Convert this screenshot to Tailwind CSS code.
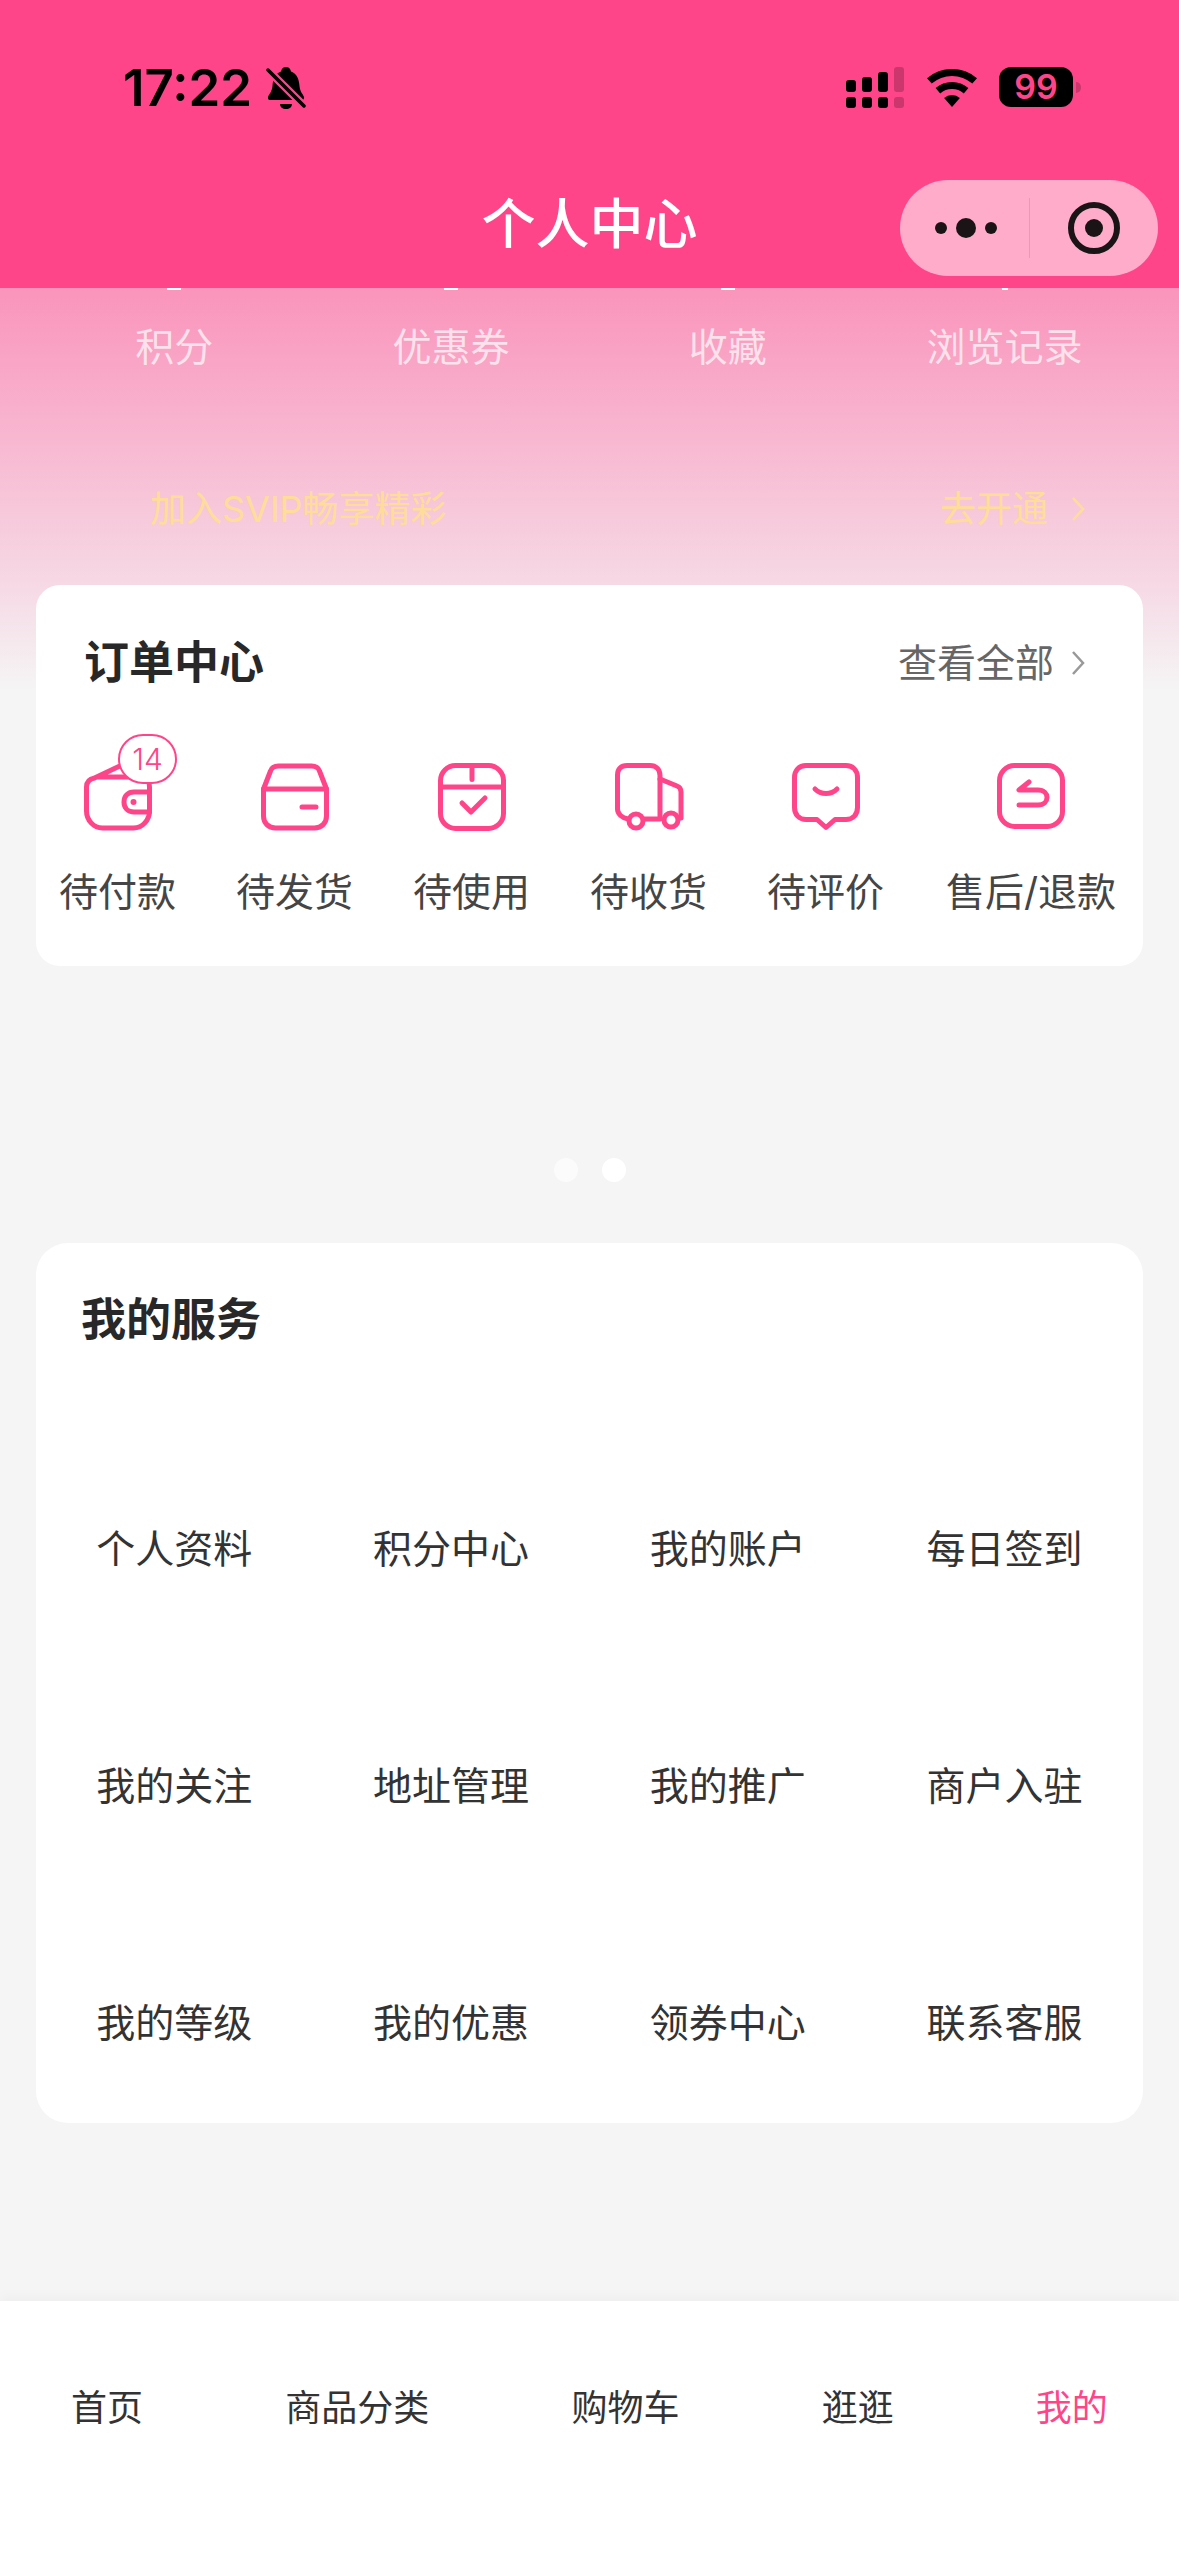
<!DOCTYPE html>
<html lang="zh-CN">
<head>
    <meta charset="UTF-8">
    <meta name="viewport" content="width=device-width, initial-scale=1.0">
    <title>个人中心</title>
    <script src="https://cdn.jsdelivr.net/npm/@tailwindcss/browser@4"></script>
</head>
<body class="bg-[#f5f5f5] font-['Inter','Noto_Sans_CJK_SC',sans-serif]">
<div class="relative flex flex-col w-[1179px] h-[2556px] overflow-hidden bg-[linear-gradient(180deg,#ff4589_0px,#fa94bb_288px,#f6d8e4_580px,#f5f5f5_690px)]">

    <!-- top bar -->
    <header class="h-[288px] shrink-0 bg-[#ff4589] relative">
        <div class="flex items-start justify-between pt-[67px] pl-[123px] pr-[98px] text-black">
            <div class="flex items-center gap-[14px] h-[41px]">
                <span class="text-[51px] leading-[41px] font-semibold">17:22</span>
                <svg width="40" height="42" viewBox="0 0 40 42">
                    <path d="M20 0c3 0 4.500 2 5 4.500C31 7 33 12 33.500 19c.5 6 3.500 8 4.500 11 .4 2-.5 3-2 3H4c-1.500 0-2.400-1-2-3 1-3 4-5 4.500-11C7 12 9 7 15 4.500 15.500 2 17 0 20 0z" fill="#000"/>
                    <path d="M14 37h12c0 3-2.500 5-6 5s-6-2-6-5z" fill="#000"/>
                    <path d="M2 3l37 37" stroke="#ff4589" stroke-width="8"/>
                    <path d="M2 3l36 36" stroke="#000" stroke-width="3.500" stroke-linecap="round"/>
                </svg>
            </div>
            <div class="flex items-start">
                <svg width="58" height="41" viewBox="0 0 58 41" class="block">
                    <g fill="#000">
                        <rect x="0" y="13" width="10" height="12" rx="3"/>
                        <rect x="16" y="10" width="10" height="15" rx="3"/>
                        <rect x="32" y="5" width="10" height="20" rx="3"/>
                        <rect x="0" y="30" width="10" height="11" rx="3"/>
                        <rect x="16" y="30" width="10" height="11" rx="3"/>
                        <rect x="32" y="30" width="10" height="11" rx="3"/>
                    </g>
                    <g fill="#000" opacity=".2">
                        <rect x="48" y="0" width="10" height="25" rx="3"/>
                        <rect x="48" y="30" width="10" height="11" rx="3"/>
                    </g>
                </svg>
                <svg width="50" height="38" viewBox="0 0 50 38" class="ml-[23px] mt-[2px]" fill="#000">
                    <path d="M0 9.300A38 38 0 0 1 50 9.300L45.300 14.600A31 31 0 0 0 4.700 14.600Z"/>
                    <path d="M8.600 19.100A25 25 0 0 1 41.400 19.100L36.800 24.400A18 18 0 0 0 13.200 24.400Z"/>
                    <path d="M17.100 28.900A12 12 0 0 1 32.900 28.900L25 38Z"/>
                </svg>
                <div class="ml-[22px] w-[74px] h-[40px] rounded-[12px] bg-black text-[#ff4589] text-[34px] leading-[40px] font-semibold text-center">99</div>
                <div class="ml-[3px] mt-[15px] w-[5px] h-[11px] rounded-r-full bg-black/20"></div>
            </div>
        </div>
        <h1 class="absolute left-0 right-0 top-[194px] text-center text-white text-[54px] leading-[62px] font-medium">个人中心</h1>
        <!-- capsule -->
        <div class="absolute left-[900px] top-[180px] w-[258px] h-[96px] rounded-[48px] bg-[#ffaccb] flex items-center">
            <div class="w-[129px] flex items-center justify-center gap-[9px] pl-[2px]">
                <span class="w-[12px] h-[12px] rounded-full bg-[#1b1417]"></span>
                <span class="w-[20px] h-[20px] rounded-full bg-[#1b1417]"></span>
                <span class="w-[12px] h-[12px] rounded-full bg-[#1b1417]"></span>
            </div>
            <div class="w-px h-[60px] bg-black/10"></div>
            <div class="flex-1 flex items-center justify-center">
                <div class="w-[52px] h-[52px] rounded-full border-[6px] border-[#1b1417] flex items-center justify-center">
                    <span class="w-[18px] h-[18px] rounded-full bg-[#1b1417]"></span>
                </div>
            </div>
        </div>
    </header>

    <!-- stat values, only their bottom edge shows below the bar -->
    <div class="grid grid-cols-4 mx-[36px] h-[2px] justify-items-center">
        <span class="w-[14px] h-[2px] bg-white"></span>
        <span class="w-[14px] h-[2px] bg-white"></span>
        <span class="w-[14px] h-[2px] bg-white"></span>
        <span class="w-[6px] h-[2px] bg-white"></span>
    </div>

    <!-- stats -->
    <div class="grid grid-cols-4 mx-[36px] pt-[34px] text-[39px] leading-[46px] text-white/70 text-center">
        <span>积分</span>
        <span>优惠券</span>
        <span>收藏</span>
        <span>浏览记录</span>
    </div>

    <!-- svip -->
    <div class="flex items-center justify-between mt-[116px] pl-[150px] pr-[94px] text-[#ffdd99] text-[36px] leading-[46px]">
        <span>加入SVIP畅享精彩</span>
        <span class="flex items-center gap-[23px]">去开通
            <svg width="14" height="26" viewBox="0 0 14 26" fill="none" stroke="#ffdd99" stroke-width="2.500"><path d="M2 2l10 11L2 24"/></svg>
        </span>
    </div>

    <!-- order center -->
    <section class="mx-[36px] mt-[53px] h-[381px] bg-white rounded-[24px] shrink-0">
        <div class="flex items-center justify-between pt-[51px] pl-[48px] pr-[58px] h-[104px]">
            <h2 class="text-[45px] leading-[54px] font-semibold text-[#282828]">订单中心</h2>
            <span class="flex items-center gap-[17px] text-[39px] leading-[46px] text-[#666]">查看全部
                <svg width="14" height="26" viewBox="0 0 14 26" fill="none" stroke="#999" stroke-width="2.500"><path d="M2 2l10 11L2 24"/></svg>
            </span>
        </div>
        <div class="flex gap-[60px] pl-[23px] pt-[74px] text-[39px] leading-[46px] text-[#454545] text-center">
            <div class="relative flex flex-col items-center w-[117px]">
                <svg width="68" height="68" viewBox="0 0 68 68" fill="none" stroke="#ff4589" stroke-width="5" stroke-linecap="round" stroke-linejoin="round" class="overflow-visible">
                    <path d="M2.500 24c0-5 3-8 8-9L40 1M2.500 24v24c0 9 7 17 16 17h31c9 0 16-8 16-17V24c0-6-4-10-10-10H14"/>
                    <path d="M65.500 29H50c-6 0-10 4-10 10s4 10 10 10h15.500z"/>
                    <circle cx="49.500" cy="39" r="3" fill="#ff4589" stroke="none"/>
                </svg>
                <span class="absolute left-[59px] top-[-29px] w-[59px] h-[50px] rounded-full border-[2px] border-[#ff4589] bg-white text-[#ff4589] text-[30px] leading-[46px] font-light">14</span>
                <span class="mt-[38px]">待付款</span>
            </div>
            <div class="flex flex-col items-center w-[117px]">
                <svg width="68" height="68" viewBox="0 0 68 68" fill="none" stroke="#ff4589" stroke-width="5" stroke-linecap="round" stroke-linejoin="round" class="overflow-visible">
                    <path d="M2.500 26l7-18c1-3 4-5 8-5h33c4 0 7 2 8 5l7 18v27c0 7-5 12-12 12h-39c-7 0-12-5-12-12z"/>
                    <path d="M2.500 26h63M41 44h14"/>
                </svg>
                <span class="mt-[38px]">待发货</span>
            </div>
            <div class="flex flex-col items-center w-[117px]">
                <svg width="68" height="68" viewBox="0 0 68 68" fill="none" stroke="#ff4589" stroke-width="5" stroke-linecap="round" stroke-linejoin="round" class="overflow-visible">
                    <rect x="2.500" y="2.500" width="63" height="63" rx="15"/>
                    <path d="M2.500 24h63M34 2.500v14M24 40l9 9 14-14"/>
                </svg>
                <span class="mt-[38px]">待使用</span>
            </div>
            <div class="flex flex-col items-center w-[117px]">
                <svg width="68" height="68" viewBox="0 0 68 68" fill="none" stroke="#ff4589" stroke-width="5" stroke-linecap="round" stroke-linejoin="round" class="overflow-visible">
                    <path d="M13 56C7 55 2.500 51 2.500 46V12C2.500 6 6 2.500 12 2.500h23c6 0 10 4 10 10V56H28"/>
                    <path d="M45 16l17 7c3 1 4 3 4 6v26"/>
                    <path d="M64 55h-1"/>
                    <circle cx="21" cy="58" r="7" fill="#fff"/>
                    <circle cx="56" cy="57" r="7" fill="#fff"/>
                </svg>
                <span class="mt-[38px]">待收货</span>
            </div>
            <div class="flex flex-col items-center w-[117px]">
                <svg width="68" height="68" viewBox="0 0 68 68" fill="none" stroke="#ff4589" stroke-width="5" stroke-linecap="round" stroke-linejoin="round" class="overflow-visible">
                    <path d="M14 2.500h40c7 0 11.500 5 11.500 12v30c0 7-4.500 12-11.500 12H43l-9 8-9-8H14C7 56.500 2.500 51.500 2.500 44.500v-30C2.500 7.500 7 2.500 14 2.500z"/>
                    <path d="M23 26c6 6 16 6 22 0"/>
                </svg>
                <span class="mt-[38px]">待评价</span>
            </div>
            <div class="flex flex-col items-center ml-[2px]">
                <svg width="68" height="68" viewBox="0 0 68 68" fill="none" stroke="#ff4589" stroke-width="5" stroke-linecap="round" stroke-linejoin="round" class="overflow-visible">
                    <rect x="2.500" y="2.500" width="63" height="61" rx="15"/>
                    <path d="M32 19l-10 8h19c12 0 12 15 0 15H22"/>
                </svg>
                <span class="mt-[38px] whitespace-nowrap">售后/退款</span>
            </div>
        </div>
    </section>

    <!-- swiper dots -->
    <div class="flex justify-center gap-[24px] pt-[192px] shrink-0">
        <span class="w-[24px] h-[24px] rounded-full bg-white/60"></span>
        <span class="w-[24px] h-[24px] rounded-full bg-white"></span>
    </div>

    <!-- services -->
    <section class="mx-[36px] mt-[61px] h-[880px] bg-white rounded-[32px] shrink-0">
        <h2 class="pt-[50px] pl-[45px] text-[45px] leading-[54px] font-semibold text-[#282828]">我的服务</h2>
        <div class="grid grid-cols-4 auto-rows-[237px] pt-[179px] text-[39px] leading-[46px] text-[#333] text-center">
            <span>个人资料</span>
            <span>积分中心</span>
            <span>我的账户</span>
            <span>每日签到</span>
            <span>我的关注</span>
            <span>地址管理</span>
            <span>我的推广</span>
            <span>商户入驻</span>
            <span>我的等级</span>
            <span>我的优惠</span>
            <span>领券中心</span>
            <span>联系客服</span>
        </div>
    </section>

    <!-- tab bar -->
    <nav class="absolute left-0 right-0 bottom-0 h-[255px] bg-white shadow-[0_-4px_12px_rgba(0,0,0,0.03)] flex justify-around pt-[85px] text-[36px] leading-[44px] text-[#333]">
        <span>首页</span>
        <span>商品分类</span>
        <span>购物车</span>
        <span>逛逛</span>
        <span class="text-[#ff4589]">我的</span>
    </nav>
</div>
</body>
</html>
